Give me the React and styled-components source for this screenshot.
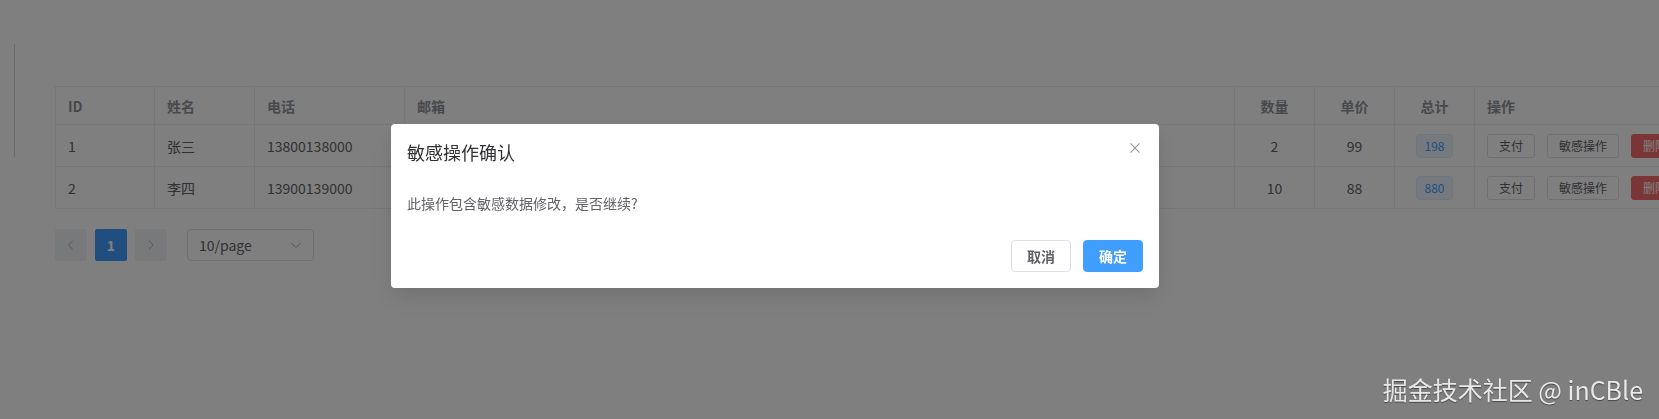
import React from "react";
import styled, { createGlobalStyle } from "styled-components";

const GlobalStyle = createGlobalStyle`
  html, body {
    margin: 0;
    padding: 0;
    overflow: hidden;
    background: #ffffff;
  }
  body {
    font-family: "Noto Sans CJK SC", "Noto Sans", sans-serif;
    color: #606266;
  }
  * { box-sizing: border-box; }
`;

const Page = styled.div`
  display: flex;
  align-items: flex-start;
  width: 1659px;
  height: 419px;
  padding-top: 44px;
  overflow: hidden;
`;

const SideRule = styled.div`
  flex-shrink: 0;
  width: 1px;
  height: 113px;
  margin-left: 14px;
  background: #d4d7de;
`;

const Main = styled.main`
  flex-shrink: 0;
  margin-left: 40px;
  padding-top: 42px;
`;

const Table = styled.div`
  width: max-content;
  border-top: 1px solid #ebeef5;
  border-left: 1px solid #ebeef5;
`;

const Row = styled.div`
  display: grid;
  grid-template-columns: 99px 100px 150px 830px 80px 80px 80px 280px;
  height: ${(p) => (p.$head ? 38 : 42)}px;
  border-bottom: 1px solid #ebeef5;
`;

const Cell = styled.div`
  display: flex;
  align-items: center;
  justify-content: ${(p) => (p.$center ? "center" : "flex-start")};
  gap: 12px;
  padding: 0 12px;
  border-right: 1px solid #ebeef5;
  font-size: 14px;
  white-space: nowrap;
  overflow: hidden;
  color: ${(p) => (p.$head ? "#909399" : "#606266")};
  font-weight: ${(p) => (p.$head ? 700 : 400)};
`;

const Tag = styled.span`
  display: inline-flex;
  align-items: center;
  height: 24px;
  padding: 0 8px;
  border: 1px solid #d9ecff;
  border-radius: 4px;
  background: #ecf5ff;
  color: #409eff;
  font-size: 12px;
`;

const SmallButton = styled.button`
  flex-shrink: 0;
  height: 24px;
  padding: 0 11px;
  border-radius: 3px;
  font-family: inherit;
  font-size: 12px;
  border: 1px solid ${(p) => (p.$danger ? "#f56c6c" : "#dcdfe6")};
  background: ${(p) => (p.$danger ? "#f56c6c" : "#ffffff")};
  color: ${(p) => (p.$danger ? "#ffffff" : "#606266")};
`;

const Pager = styled.div`
  display: flex;
  align-items: center;
  margin-top: 20px;
`;

const PageBtn = styled.button`
  display: flex;
  align-items: center;
  justify-content: center;
  width: 32px;
  height: 32px;
  margin-right: 8px;
  padding: 0;
  border: none;
  border-radius: 2px;
  font-family: inherit;
  font-size: 14px;
  font-weight: 700;
  background: ${(p) => (p.$active ? "#409eff" : "#f0f2f5")};
  color: ${(p) => (p.$active ? "#ffffff" : "#a8abb2")};
`;

const SizeSelect = styled.div`
  display: flex;
  align-items: center;
  justify-content: space-between;
  width: 127px;
  height: 32px;
  margin-left: 12px;
  padding: 0 10px 0 11px;
  border: 1px solid #dcdfe6;
  border-radius: 4px;
  font-size: 14px;
  color: #606266;
`;

const Overlay = styled.div`
  position: fixed;
  inset: 0;
  background: rgba(0, 0, 0, 0.5);
`;

const Dialog = styled.section`
  width: 768px;
  margin: 124px 0 0 391px;
  padding: 16px;
  background: #ffffff;
  border-radius: 4px;
  box-shadow: 0 12px 32px 4px rgba(0, 0, 0, 0.04), 0 8px 20px rgba(0, 0, 0, 0.08);
`;

const DialogHeader = styled.header`
  display: flex;
  justify-content: space-between;
  align-items: flex-start;
  padding-bottom: 16px;
`;

const DialogTitle = styled.h2`
  margin: 0;
  font-size: 18px;
  font-weight: 400;
  line-height: 24px;
  color: #303133;
`;

const CloseBtn = styled.button`
  display: flex;
  width: 16px;
  height: 16px;
  padding: 0;
  border: none;
  background: none;
  color: #909399;
`;

const DialogBody = styled.div`
  padding: 12px 0 10px;
  font-size: 14px;
  line-height: 22px;
  color: #606266;
`;

const DialogFooter = styled.footer`
  display: flex;
  justify-content: flex-end;
  gap: 12px;
  padding-top: 16px;
`;

const Button = styled.button`
  height: 32px;
  padding: 0 15px;
  border-radius: 4px;
  font-family: inherit;
  font-size: 14px;
  font-weight: 700;
  border: 1px solid ${(p) => (p.$primary ? "#409eff" : "#dcdfe6")};
  background: ${(p) => (p.$primary ? "#409eff" : "#ffffff")};
  color: ${(p) => (p.$primary ? "#ffffff" : "#606266")};
`;

const Watermark = styled.div`
  position: fixed;
  right: 16px;
  bottom: 12px;
  font-size: 25px;
  line-height: 35px;
  color: #e8e8e8;
  text-shadow: 0 1px 1px rgba(0, 0, 0, 0.45);
  white-space: nowrap;
`;

const Chevron = ({ dir }) => (
  <svg width="12" height="12" viewBox="0 0 1024 1024" fill="currentColor">
    {dir === "left" ? (
      <path d="M609.408 149.376 277.76 489.6a32 32 0 0 0 0 44.672l331.648 340.352a29.12 29.12 0 0 0 41.728 0 30.592 30.592 0 0 0 0-42.752L339.264 511.936l311.872-319.872a30.592 30.592 0 0 0 0-42.688 29.12 29.12 0 0 0-41.728 0z" />
    ) : (
      <path d="M340.864 149.312a30.592 30.592 0 0 0 0 42.752L652.736 512 340.864 831.872a30.592 30.592 0 0 0 0 42.752 29.12 29.120 0 0 0 41.728 0L714.24 534.336a32 32 0 0 0 0-44.672L382.592 149.376a29.12 29.12 0 0 0-41.728 0z" />
    )}
  </svg>
);

const ArrowDown = () => (
  <svg width="14" height="14" viewBox="0 0 1024 1024" fill="#a8abb2">
    <path d="M831.872 340.864 512 652.672 192.128 340.864a30.592 30.592 0 0 0-42.752 0 29.12 29.12 0 0 0 0 41.6L489.664 714.24a32 32 0 0 0 44.672 0l340.288-331.712a29.12 29.12 0 0 0 0-41.728 30.592 30.592 0 0 0-42.752 0z" />
  </svg>
);

const CloseIcon = () => (
  <svg width="16" height="16" viewBox="0 0 1024 1024" fill="currentColor">
    <path d="M764.288 214.592 512 466.88 259.712 214.592a31.936 31.936 0 0 0-45.12 45.12L466.752 512 214.528 764.224a31.936 31.936 0 1 0 45.12 45.184L512 557.184l252.288 252.288a31.936 31.936 0 0 0 45.12-45.12L557.12 512.064l252.288-252.352a31.936 31.936 0 1 0-45.12-45.184z" />
  </svg>
);

const rows = [
  { id: 1, name: "张三", phone: "13800138000", email: "zhangsan@example.com", qty: 2, price: 99 },
  { id: 2, name: "李四", phone: "13900139000", email: "lisi@example.com", qty: 10, price: 88 },
];

export default function App() {
  return (
    <>
      <GlobalStyle />
      <Page>
        <SideRule />
        <Main>
          <Table>
            <Row $head>
              <Cell $head>ID</Cell>
              <Cell $head>姓名</Cell>
              <Cell $head>电话</Cell>
              <Cell $head>邮箱</Cell>
              <Cell $head $center>数量</Cell>
              <Cell $head $center>单价</Cell>
              <Cell $head $center>总计</Cell>
              <Cell $head>操作</Cell>
            </Row>
            {rows.map((r) => (
              <Row key={r.id}>
                <Cell>{r.id}</Cell>
                <Cell>{r.name}</Cell>
                <Cell>{r.phone}</Cell>
                <Cell>{r.email}</Cell>
                <Cell $center>{r.qty}</Cell>
                <Cell $center>{r.price}</Cell>
                <Cell $center>
                  <Tag>{r.qty * r.price}</Tag>
                </Cell>
                <Cell>
                  <SmallButton>支付</SmallButton>
                  <SmallButton>敏感操作</SmallButton>
                  <SmallButton $danger>删除</SmallButton>
                </Cell>
              </Row>
            ))}
          </Table>
          <Pager>
            <PageBtn>
              <Chevron dir="left" />
            </PageBtn>
            <PageBtn $active>1</PageBtn>
            <PageBtn>
              <Chevron dir="right" />
            </PageBtn>
            <SizeSelect>
              <span>10/page</span>
              <ArrowDown />
            </SizeSelect>
          </Pager>
        </Main>
      </Page>
      <Overlay>
        <Dialog>
          <DialogHeader>
            <DialogTitle>敏感操作确认</DialogTitle>
            <CloseBtn aria-label="关闭">
              <CloseIcon />
            </CloseBtn>
          </DialogHeader>
          <DialogBody>此操作包含敏感数据修改，是否继续?</DialogBody>
          <DialogFooter>
            <Button>取消</Button>
            <Button $primary>确定</Button>
          </DialogFooter>
        </Dialog>
      </Overlay>
      <Watermark>掘金技术社区 @ inCBle</Watermark>
    </>
  );
}
